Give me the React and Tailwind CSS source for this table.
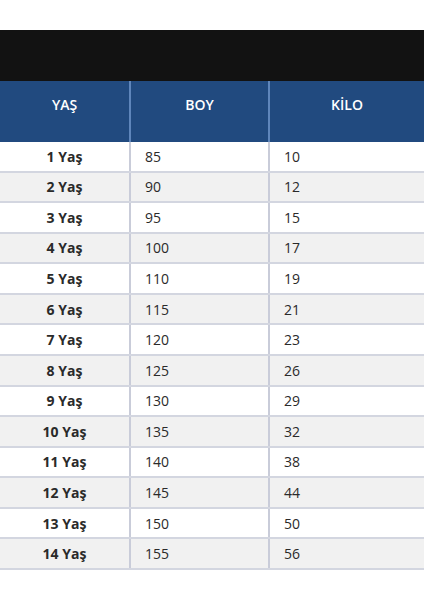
import React from 'react';

const rows = [
  ['1 Yaş', '85', '10'],
  ['2 Yaş', '90', '12'],
  ['3 Yaş', '95', '15'],
  ['4 Yaş', '100', '17'],
  ['5 Yaş', '110', '19'],
  ['6 Yaş', '115', '21'],
  ['7 Yaş', '120', '23'],
  ['8 Yaş', '125', '26'],
  ['9 Yaş', '130', '29'],
  ['10 Yaş', '135', '32'],
  ['11 Yaş', '140', '38'],
  ['12 Yaş', '145', '44'],
  ['13 Yaş', '150', '50'],
  ['14 Yaş', '155', '56'],
];

export default function App() {
  return (
    <div className="w-[424px] h-[600px] bg-white pt-[30px]" style={{ fontFamily: '"Open Sans", "Liberation Sans", sans-serif' }}>
      <div className="h-[51px] bg-[#121212]" />
      <div className="grid grid-cols-[131px_139px_1fr] h-[61px] bg-[#214a7f] text-white text-[14px] font-semibold">
        <div className="flex items-center justify-center border-r-2 border-[#5f86bb] pb-[14px]">YAŞ</div>
        <div className="flex items-center justify-center border-r-2 border-[#5f86bb] pb-[14px]">BOY</div>
        <div className="flex items-center justify-center pb-[14px]">KİLO</div>
      </div>
      <div className="flex flex-col">
        {rows.map((r, i) => (
          <div
            key={r[0]}
            className={`grid grid-cols-[131px_139px_1fr] h-[30.57px] border-b-2 border-[#d3d6e0] text-[14px] text-[#2a2a2a] ${i % 2 === 0 ? 'bg-white' : 'bg-[#f1f1f1]'}`}
          >
            <div className="flex items-center justify-center border-r-2 border-[#c9ccd9] font-bold">{r[0]}</div>
            <div className="flex items-center pl-[14px] border-r-2 border-[#c9ccd9]">{r[1]}</div>
            <div className="flex items-center pl-[14px]">{r[2]}</div>
          </div>
        ))}
      </div>
    </div>
  );
}
